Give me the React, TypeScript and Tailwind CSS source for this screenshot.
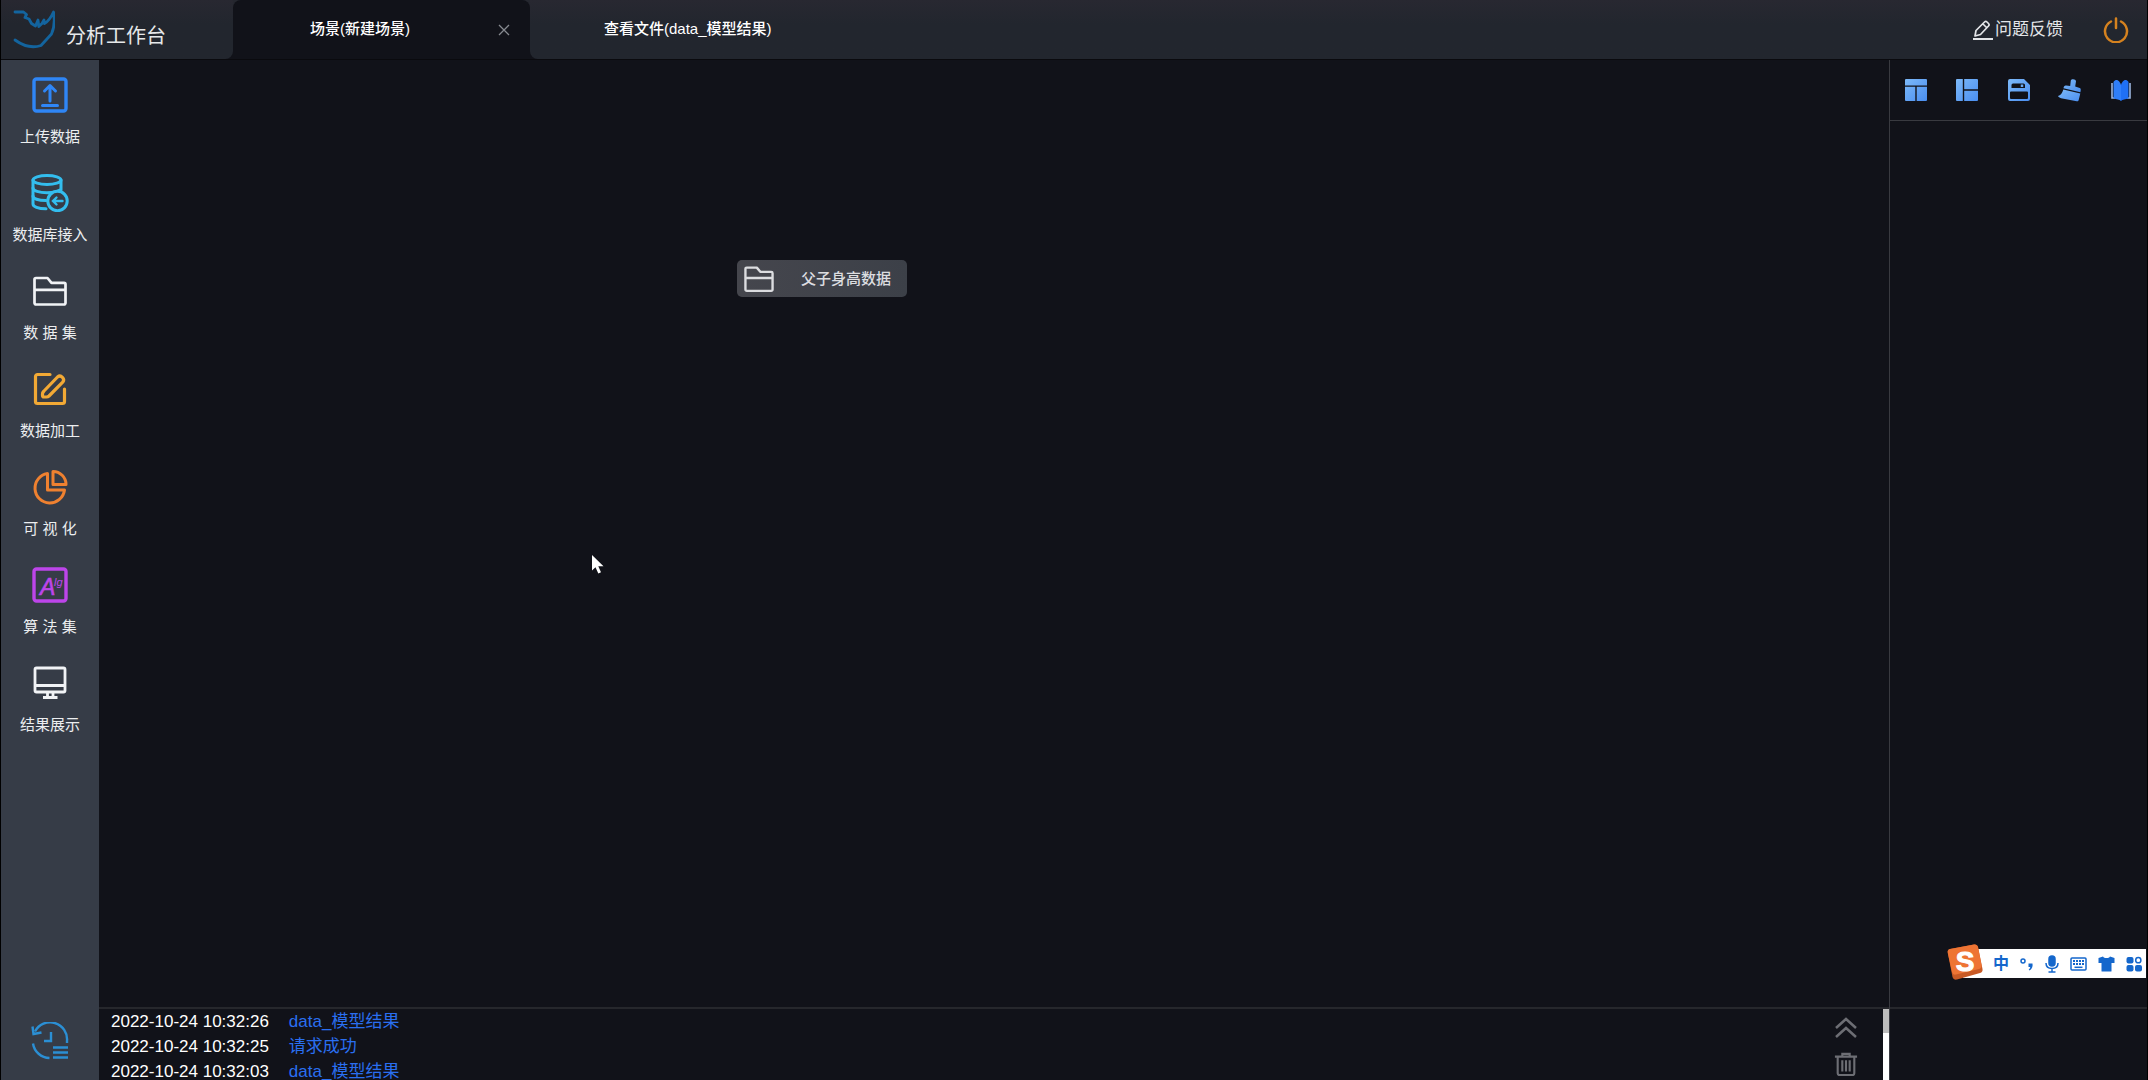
import React from 'react';

interface IconProps {
  className?: string;
}

const UploadIcon: React.FC<IconProps> = ({ className }) => (
  <svg className={className} viewBox="0 0 36 36" fill="none" stroke="#2f86f6" strokeWidth="3.400" strokeLinecap="round" strokeLinejoin="round">
    <rect x="2" y="2" width="32" height="32" rx="2.500" />
    <path d="M18 24V10M12.500 14 18 8.500l5.500 5.500M10.500 28.500h15" strokeWidth="3" />
  </svg>
);

const DatabaseIcon: React.FC<IconProps> = ({ className }) => (
  <svg className={className} viewBox="0 0 38 38" fill="none" stroke="#33bdee" strokeWidth="3" strokeLinecap="round">
    <ellipse cx="16" cy="6" rx="14" ry="4.500" />
    <path d="M2 6v24c0 2.500 5 4.800 13 4.800M30 6v10" />
    <path d="M2 14c0 2.700 6 4.800 14 4.800 5.500 0 10.500-1 13-2.800M2 22c0 2.500 5 4.600 13 4.600" />
    <circle cx="26.500" cy="27" r="9.700" fill="#363c47" />
    <path d="M31.500 27h-9M25.500 23.500 22 27l3.500 3.500" strokeWidth="2.400" />
  </svg>
);

const FolderIcon: React.FC<IconProps> = ({ className }) => (
  <svg className={className} viewBox="0 0 36 32" fill="none" stroke="currentColor" strokeWidth="2.700" strokeLinejoin="round">
    <path d="M2.500 28V4.500A1.500 1.500 0 0 1 4 3h11.500l4 4.800H32a1.500 1.500 0 0 1 1.500 1.500V28a1.500 1.500 0 0 1-1.500 1.500H4A1.500 1.500 0 0 1 2.500 28ZM2.500 14.800h31" />
  </svg>
);

const EditIcon: React.FC<IconProps> = ({ className }) => (
  <svg className={className} viewBox="0 0 36 36" fill="none" stroke="#f2a935" strokeWidth="3.200" strokeLinecap="round" strokeLinejoin="round">
    <path d="M18 3.500H5.500a2 2 0 0 0-2 2v25a2 2 0 0 0 2 2h25a2 2 0 0 0 2-2V18" />
    <path d="M12 20 25.500 6a3.700 3.700 0 0 1 5.200 5.200L17 25a3.700 3.700 0 0 1-2.600 1H12a1.500 1.500 0 0 1-1.500-1.500V23c0-1.200.6-2.100 1.500-3Z" />
  </svg>
);

const PieIcon: React.FC<IconProps> = ({ className }) => (
  <svg className={className} viewBox="0 0 36 36" fill="none" stroke="#ef8130" strokeWidth="3" strokeLinejoin="round">
    <path d="M15.500 4.500A14.800 14.800 0 1 0 32.500 21H15.500Z" />
    <path d="M21 2.500V15.500h13A13 13 0 0 0 21 2.500Z" />
  </svg>
);

const AlgorithmIcon: React.FC<IconProps> = ({ className }) => (
  <svg className={className} viewBox="0 0 36 36">
    <rect x="2" y="2" width="32" height="32" rx="2.500" fill="none" stroke="#bd45ea" strokeWidth="3.400" />
    <text x="8" y="28" fill="#bd45ea" stroke="#bd45ea" strokeWidth=".6" fontFamily="Liberation Sans, sans-serif" fontSize="23" fontStyle="italic">A</text>
    <text x="22" y="19" fill="#bd45ea" fontFamily="Liberation Sans, sans-serif" fontSize="11" fontStyle="italic">lg</text>
  </svg>
);

const MonitorIcon: React.FC<IconProps> = ({ className }) => (
  <svg className={className} viewBox="0 0 36 36" fill="none" stroke="#f1f3f6" strokeWidth="2.800" strokeLinejoin="round">
    <rect x="3" y="3" width="30" height="24" rx="1.500" />
    <path d="M3 20.500h30M15.500 27v5M21 27v5M11 32.500h14.500" />
  </svg>
);

const HistoryIcon: React.FC<IconProps> = ({ className }) => (
  <svg className={className} viewBox="0 0 38 38" fill="none" stroke="#2b8fd4" strokeWidth="2.400">
    <path d="M4 9.500A17 17 0 0 1 36 19v2M2 21.500A17 17 0 0 0 18.500 36" />
    <path d="M1.500 4.500 2.500 12l8-1.500" />
    <path d="M20 10v9h-7" />
    <path d="M22 25.500h15M22 30.500h15M22 35.500h15" strokeWidth="2.600" />
  </svg>
);

const LogoIcon: React.FC<IconProps> = ({ className }) => (
  <svg className={className} viewBox="0 0 42 40" fill="none" stroke="#13649e" strokeWidth="2.800" strokeLinejoin="round" strokeLinecap="round">
    <path d="M2 2h8.500l3 2.500-1.500 3 4 1.500 2.500 4.500 4 2.500 2.500-6 .8 6.500L29 13.500l2-3.500.5 3.500C36 11 38.500 6.500 40.500 2c1.500 9 .5 16.500-2 22L28 35.500C19 38.500 11 36.500 2 30" />
  </svg>
);

const PenIcon: React.FC<IconProps> = ({ className }) => (
  <svg className={className} viewBox="0 0 20 20" fill="none" stroke="#e3e5e8" strokeWidth="1.700" strokeLinejoin="round">
    <path d="M2 16 3 10.500 11.500 2a1.800 1.800 0 0 1 2.500 0l1.500 1.500a1.800 1.800 0 0 1 0 2.500L7.500 14.500ZM10 4l4 4" />
    <path d="M0 19h20" strokeWidth="2" />
  </svg>
);

const PowerIcon: React.FC<IconProps> = ({ className }) => (
  <svg className={className} viewBox="0 0 26 26" fill="none" stroke="#d5821f" strokeWidth="2.500" strokeLinecap="round">
    <path d="M8 4.500a11 11 0 1 0 10 0M13 1.500V11" />
  </svg>
);

const BlueGradient: React.FC<{ id: string }> = ({ id }) => (
  <linearGradient id={id} x1="0" y1="0" x2="1" y2="1">
    <stop offset="0" stopColor="#7db9f8" />
    <stop offset="1" stopColor="#4a8ef0" />
  </linearGradient>
);

const RowsLayoutIcon = () => (
  <svg className="size-6" viewBox="0 0 24 24" fill="url(#rows)">
    <defs><BlueGradient id="rows" /></defs>
    <path d="M1 2a1 1 0 0 1 1-1h20a1 1 0 0 1 1 1v5.500H1ZM1 8.800h10.300V23H2a1 1 0 0 1-1-1ZM12.700 8.800H23V22a1 1 0 0 1-1 1h-9.300Z" />
  </svg>
);

const ColumnsLayoutIcon = () => (
  <svg className="size-6" viewBox="0 0 24 24" fill="url(#columns)">
    <defs><BlueGradient id="columns" /></defs>
    <path d="M2 1h5.800v22H2a1 1 0 0 1-1-1V2a1 1 0 0 1 1-1ZM9.200 1H22a1 1 0 0 1 1 1v9.300H9.200ZM9.200 12.700H23V22a1 1 0 0 1-1 1H9.200Z" />
  </svg>
);

const SaveIcon = () => (
  <svg className="size-6" viewBox="0 0 24 24" fill="none">
    <defs><BlueGradient id="save" /></defs>
    <path fill="url(#save)" fillRule="evenodd" d="M3 1h14l6 6v14a2 2 0 0 1-2 2H3a2 2 0 0 1-2-2V3a2 2 0 0 1 2-2ZM6 5.500a1.500 1.500 0 0 0-1.500 1.500v3H18V7a1.500 1.500 0 0 0-1.500-1.500ZM4 13.500a1 1 0 0 0-1 1V20a1 1 0 0 0 1 1h16a1 1 0 0 0 1-1v-5.500a1 1 0 0 0-1-1Z" />
    <path d="M15 6.500v2.500" stroke="#6aabf5" strokeWidth="2.500" />
  </svg>
);

const BrushIcon = () => (
  <svg className="size-6" viewBox="0 0 24 24" fill="url(#brush)">
    <defs><BlueGradient id="brush" /></defs>
    <path d="M12.800 2.500c.4-2 5.300-1.600 5.200.7L17.200 8.500l4.500 1.500c.8.300 1.200 1.200 1 2.500l-.3 1.800L5.500 10.300c.3-2 1.200-3 2.700-2.700l4 .5Z" />
    <path d="M5.300 11.500 22.300 15.500l-1.600 6.500c-.3 1.200-1 1.500-2 1.200L3 20.300C1.500 19.800.5 19 0 18c2.500-.7 4.300-2.700 5.300-6.500Z" />
  </svg>
);

const BookIcon = () => (
  <svg className="size-6" viewBox="0 0 24 24">
    <path d="M3 5v15h3M21 5v15h-3" fill="none" stroke="#9cb6df" strokeWidth="1.600" />
    <path d="M4.500 4C6 2 7.500 1.500 9 2.500c1.500 1 2.500 2.500 3 4.500v16c-1.500-1.500-4.500-2-7.500-2.500Z" fill="#2f7ffb" />
    <path d="M19.500 4C18 2 16.500 1.500 15 2.500c-1.500 1-2.500 2.500-3 4.500v16c1.500-1.500 4.500-2 7.500-2.500Z" fill="#1f70f5" />
  </svg>
);

const menuItems = [
  { label: '上传数据', icon: <UploadIcon className="size-9" /> },
  { label: '数据库接入', icon: <DatabaseIcon className="size-[38px]" /> },
  { label: '数 据 集', icon: <FolderIcon className="h-8 w-9 text-[#f1f3f6]" /> },
  { label: '数据加工', icon: <EditIcon className="size-9" /> },
  { label: '可 视 化', icon: <PieIcon className="size-9" /> },
  { label: '算 法 集', icon: <AlgorithmIcon className="size-9" /> },
  { label: '结果展示', icon: <MonitorIcon className="size-9" /> },
];

const tools = [
  { label: '横向布局', icon: <RowsLayoutIcon /> },
  { label: '纵向布局', icon: <ColumnsLayoutIcon /> },
  { label: '保存', icon: <SaveIcon /> },
  { label: '清空', icon: <BrushIcon /> },
  { label: '帮助', icon: <BookIcon /> },
];

const logs = [
  { time: '2022-10-24 10:32:26', text: 'data_模型结果' },
  { time: '2022-10-24 10:32:25', text: '请求成功' },
  { time: '2022-10-24 10:32:03', text: 'data_模型结果' },
];

const Header = () => (
  <header className="flex h-[59px] shrink-0 bg-[#111219] text-white">
    <div className="flex w-[232px] items-center gap-[11px] rounded-br-lg bg-linear-to-b from-[#282831] to-[#22262e] to-40% pl-3">
      <LogoIcon className="h-10 w-[42px]" />
      <h1 className="pt-3 text-xl text-[#e6e8ea]">分析工作台</h1>
    </div>
    <nav className="flex flex-1">
      <div className="bg-[#25272f]">
        <div className="flex h-full w-[297px] items-center justify-end gap-[84px] rounded-t-lg bg-[#111219] pr-4">
          <a href="#scene" className="text-[15px] font-medium">场景(新建场景)</a>
          <button aria-label="关闭" className="flex size-5 items-center justify-center">
            <svg className="size-3" viewBox="0 0 12 12" stroke="#878a90" strokeWidth="1.300">
              <path d="M1 1l10 10M11 1 1 11" />
            </svg>
          </button>
        </div>
      </div>
      <div className="flex flex-1 items-center justify-between rounded-bl-lg bg-linear-to-b from-[#282831] to-[#22262e] to-40% pr-[18px] pl-[74px]">
        <a href="#file" className="text-[15px] font-medium">查看文件(data_模型结果)</a>
        <div className="flex items-center gap-10">
          <button className="flex items-center gap-[2px] text-[17px] text-[#e3e5e8]">
            <PenIcon className="size-5" />
            问题反馈
          </button>
          <button aria-label="退出">
            <PowerIcon className="size-[26px]" />
          </button>
        </div>
      </div>
    </nav>
  </header>
);

const Sidebar = () => (
  <aside className="flex w-[98px] shrink-0 flex-col items-center justify-between bg-[#363c47] pt-[17px] pb-5">
    <ul className="flex w-full flex-col gap-7">
      {menuItems.map(item => (
        <li key={item.label}>
          <button className="flex w-full flex-col items-center gap-[14px] text-[15px] leading-5 text-[#eceef0]">
            <span className="flex h-9 items-center">{item.icon}</span>
            {item.label}
          </button>
        </li>
      ))}
    </ul>
    <button aria-label="历史记录">
      <HistoryIcon className="size-[38px]" />
    </button>
  </aside>
);

const Canvas = () => (
  <section className="relative min-h-0 flex-1">
    <button className="absolute top-[200px] left-[638px] flex h-[37px] w-[170px] items-center rounded-[5px] bg-linear-to-r from-[#45464d] to-[#3c4048] pr-4 pl-1 text-[15px] text-[#dcdde0]">
      <FolderIcon className="h-7 w-9" />
      <span className="flex-1 pt-px text-right font-medium">父子身高数据</span>
    </button>
  </section>
);

const LogPanel = () => (
  <section className="flex h-[73px] border-t-2 border-[#26272c]">
    <ul className="flex-1 overflow-hidden pl-3 text-[17px] leading-[25px] text-white">
      {logs.map(log => (
        <li key={log.time} className="flex gap-5">
          <time>{log.time}</time>
          <a href="#log" className="text-[#2a6ff0]">{log.text}</a>
        </li>
      ))}
    </ul>
    <div className="flex flex-col items-center gap-3 pt-[7px] pr-[25px] text-[#6d6e74]">
      <button aria-label="展开">
        <svg className="size-6" viewBox="0 0 24 24" fill="none" stroke="currentColor" strokeWidth="2.500">
          <path d="M2 12 12 3l10 9M2 21l10-9 10 9" />
        </svg>
      </button>
      <button aria-label="清空日志">
        <svg className="size-6" viewBox="0 0 24 26" fill="none" stroke="currentColor" strokeWidth="2.300">
          <path d="M0 5h24M8 4.500V2h8v2.500M3 5v18a2 2 0 0 0 2 2h14a2 2 0 0 0 2-2V5M8 9v12M12 9v12M16 9v12" />
        </svg>
      </button>
    </div>
    <div className="w-[6px] bg-white">
      <div className="h-6 bg-[#bcbcbc]" />
    </div>
  </section>
);

const InputMethodBar = () => (
  <div className="absolute right-px bottom-[102px] flex h-[29px] items-center gap-[11px] bg-white pr-1 text-[#1467cc]">
    <svg className="-mt-1 -ml-4 size-9" viewBox="0 0 36 36">
      <path d="M3 5 27 0.500c2-.4 3.500.6 4 2.500l4.500 22c.4 2-.5 3.500-2.500 4L10 35.500c-2 .5-4-.5-4.500-2.500L.8 9C.4 7 1 5.500 3 5Z" fill="#c95a25" />
      <path d="M3 5 27 0.500c2-.4 3.500.6 4 2.500l3.500 18c.4 2-.5 3.500-2.500 4L9 30.500c-2 .5-3.500-.5-4-2.500L.8 9C.4 7 1 5.500 3 5Z" fill="#ee7434" />
      <text x="18" y="27" fill="#fff" stroke="#fff" strokeWidth="1" fontFamily="Liberation Sans, sans-serif" fontSize="28" fontWeight="bold" textAnchor="middle">S</text>
    </svg>
    <span className="-ml-px text-base leading-5 font-bold">中</span>
    <svg className="h-4 w-[14px]" viewBox="0 0 14 16">
      <circle cx="3" cy="5" r="2" fill="none" stroke="currentColor" strokeWidth="1.500" />
      <path d="M8.500 7.500h4c.5 3-.5 5.500-3 7l-.8-1c1-.7 1.500-1.500 1.500-2.500H8.500Z" fill="currentColor" />
    </svg>
    <svg className="h-[18px] w-[14px]" viewBox="0 0 14 18" fill="none" stroke="currentColor" strokeWidth="1.500">
      <rect x="4" y="1" width="6" height="10" rx="3" fill="currentColor" />
      <path d="M1 8c0 3.500 2.500 5.500 6 5.500s6-2 6-5.500M7 14v3M3.500 17h7" />
    </svg>
    <svg className="h-[14px] w-[17px]" viewBox="0 0 17 14" fill="none" stroke="currentColor" strokeWidth="1.500">
      <rect x="1" y="1" width="15" height="12" rx="1" />
      <path d="M3 4h11M3 7h11" strokeWidth="2" strokeDasharray="2 1" />
      <path d="M4.500 10.300h8" />
    </svg>
    <svg className="h-4 w-[17px]" viewBox="0 0 17 16" fill="currentColor">
      <path d="M5 .5c1 2 6 2 7 0l4.500 1.500v5h-3V15q0 .5-.5.500H4q-.5 0-.5-.5V7h-3V2Z" />
    </svg>
    <svg className="size-4" viewBox="0 0 16 16" fill="currentColor">
      <rect x=".5" y="1" width="7" height="6.500" rx="2" />
      <rect x=".5" y="9" width="7" height="6.500" rx="2" />
      <rect x="9" y="9" width="7" height="6.500" rx="2" />
      <circle cx="12.300" cy="4.200" r="2.600" fill="none" stroke="currentColor" strokeWidth="1.500" />
    </svg>
  </div>
);

export default function App() {
  return (
    <div className="relative flex h-screen flex-col overflow-hidden border-x border-black bg-[#111219] font-['Liberation_Sans','Noto_Sans_CJK_SC',sans-serif]">
      <Header />
      <div className="flex min-h-0 flex-1 border-t border-[#0a0a0e]">
        <Sidebar />
        <main className="flex min-w-0 flex-1 flex-col">
          <Canvas />
          <LogPanel />
        </main>
        <aside className="flex w-[258px] shrink-0 flex-col border-l border-[#393a40]">
          <div className="flex h-[61px] items-center justify-between border-b border-[#393a40] px-[14px]">
            {tools.map(tool => (
              <button key={tool.label} aria-label={tool.label}>{tool.icon}</button>
            ))}
          </div>
          <div className="flex-1" />
          <div className="h-[73px] border-t-2 border-[#26272c]" />
        </aside>
      </div>
      <InputMethodBar />
      <svg className="pointer-events-none absolute top-[554px] left-[590px] h-[21px] w-[14px]" viewBox="0 0 14 21">
        <path d="M1 1v15.500l3.500-3.200L7.300 19.500l2.700-1.200-2.700-6H12.500Z" fill="#fff" />
      </svg>
    </div>
  );
}
